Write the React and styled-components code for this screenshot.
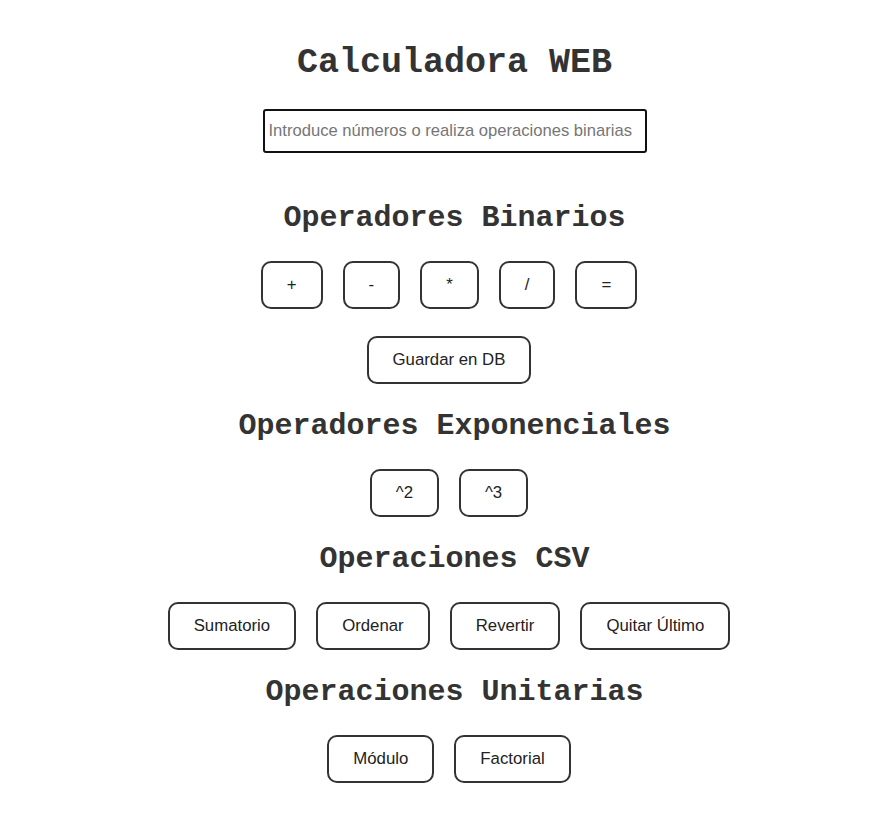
import React from 'react';
import styled, { createGlobalStyle } from 'styled-components';

const GlobalStyle = createGlobalStyle`
  body {
    margin: 0;
    background: #fff;
    font-family: "Liberation Sans", Arial, sans-serif;
  }
`;

const Page = styled.div`
  box-sizing: border-box;
  width: 100%;
  padding: 43px 0 40px 38px;
  display: flex;
  flex-direction: column;
  align-items: center;
`;

const Title = styled.h1`
  margin: 0 0 26px;
  font-family: "Liberation Mono", "Courier New", monospace;
  font-size: 35px;
  line-height: 40px;
  font-weight: bold;
  color: #333;
`;

const Input = styled.input`
  box-sizing: border-box;
  width: 384px;
  height: 44px;
  margin: 0 0 48px;
  padding: 0 4px;
  border: 2px solid #111;
  border-radius: 3px;
  font-family: "Liberation Sans", Arial, sans-serif;
  font-size: 16.6px;
  color: #222;
  outline: none;

  &::placeholder {
    color: #767676;
  }
`;

const Section = styled.section`
  display: flex;
  flex-direction: column;
  align-items: center;
  gap: 26px;
  margin-bottom: 25px;
`;

const Heading = styled.h2`
  margin: 0;
  font-family: "Liberation Mono", "Courier New", monospace;
  font-size: 30px;
  line-height: 34px;
  font-weight: bold;
  color: #333;
`;

const Rows = styled.div`
  display: flex;
  flex-direction: column;
  align-items: center;
  gap: 27px;
`;

const ButtonRow = styled.div`
  display: flex;
  justify-content: center;
  gap: 20px;
  padding-right: 11px;
`;

const Button = styled.button`
  padding: 12px 24px;
  border: 2px solid #333;
  border-radius: 10px;
  background: #fff;
  font-family: "Liberation Sans", Arial, sans-serif;
  font-size: 16.8px;
  line-height: 20px;
  color: #222;
  cursor: pointer;
`;

const sections = [
  {
    title: 'Operadores Binarios',
    rows: [['+', '-', '*', '/', '='], ['Guardar en DB']],
  },
  { title: 'Operadores Exponenciales', rows: [['^2', '^3']] },
  {
    title: 'Operaciones CSV',
    rows: [['Sumatorio', 'Ordenar', 'Revertir', 'Quitar Último']],
  },
  { title: 'Operaciones Unitarias', rows: [['Módulo', 'Factorial']] },
];

const App = () => {
  return (
    <Page>
      <GlobalStyle />
      <Title>Calculadora WEB</Title>
      <Input placeholder="Introduce números o realiza operaciones binarias" />
      {sections.map((section) => (
        <Section key={section.title}>
          <Heading>{section.title}</Heading>
          <Rows>
            {section.rows.map((row, i) => (
              <ButtonRow key={i}>
                {row.map((label) => (
                  <Button key={label}>{label}</Button>
                ))}
              </ButtonRow>
            ))}
          </Rows>
        </Section>
      ))}
    </Page>
  );
};

export default App;
